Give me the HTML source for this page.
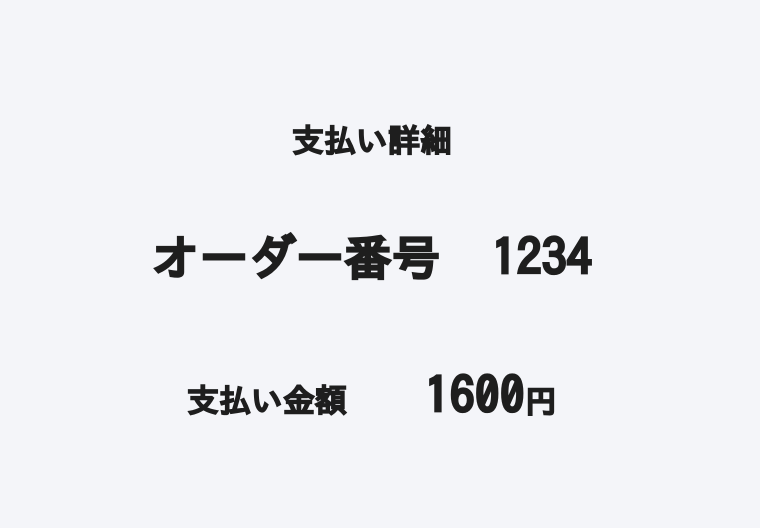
<!DOCTYPE html>
<html><head><meta charset="utf-8"><style>
body{margin:0;width:760px;height:528px;background:#f4f5f9;position:relative;overflow:hidden;font-family:"IPAGothic","Noto Sans CJK JP",sans-serif;font-weight:bold;color:#1e1e1e}
div{position:absolute;line-height:1;white-space:nowrap}
.s{-webkit-text-stroke:1.3px #1e1e1e}
.l{-webkit-text-stroke:1.8px #1e1e1e}
</style></head><body>
<div class="s" style="left:292px;top:124px;font-size:32px">支払い詳細</div>
<div class="l" style="left:152px;top:233px;font-size:48px">オーダー番号</div>
<div class="l" style="left:492px;top:232px;font-size:49px;letter-spacing:0.5px">1234</div>
<div class="s" style="left:187px;top:384px;font-size:32px">支払い金額</div>
<div class="l" style="left:425px;top:370px;font-size:49px;letter-spacing:0.5px">1600<span class="s" style="font-size:32px;letter-spacing:0">円</span></div>
</body></html>
